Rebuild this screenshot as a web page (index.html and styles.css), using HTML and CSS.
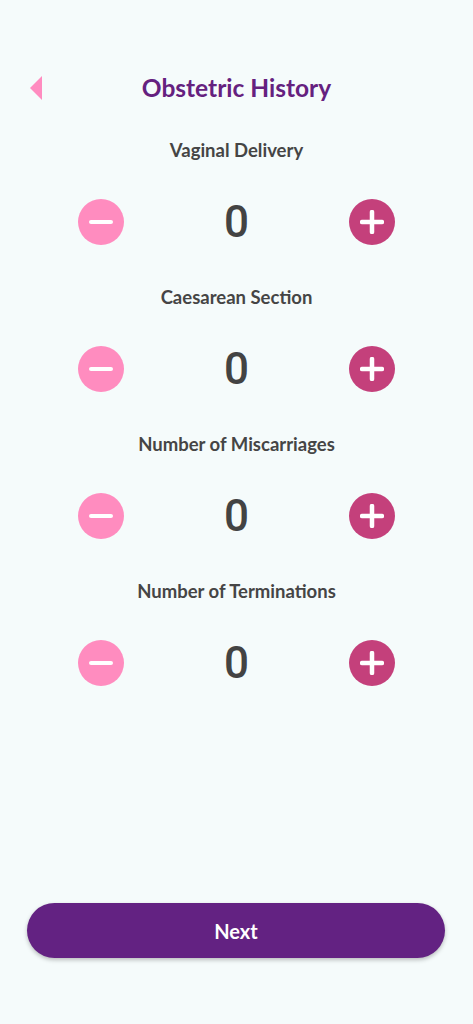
FILE: index.html
```html
<!DOCTYPE html>
<html lang="en">
<head>
<meta charset="utf-8">
<title>Obstetric History</title>
<link rel="stylesheet" href="styles.css">
</head>
<body>
<div class="screen">
  <header class="header">
    <button class="back" aria-label="Back">
      <svg width="12" height="24" viewBox="0 0 12 24"><path d="M12 0 L0 12 L12 24 Z" fill="#ff8cc0"/></svg>
    </button>
    <h1 class="title">Obstetric History</h1>
    <span></span>
  </header>

  <main class="groups">
    <section class="group">
      <div class="label">Vaginal Delivery</div>
      <div class="stepper">
        <button class="btn minus" aria-label="Decrease"><svg width="24" height="24" viewBox="0 0 24 24"><line x1="2" y1="12" x2="22" y2="12" stroke="#fff" stroke-width="4" stroke-linecap="round"/></svg></button>
        <span class="value">0</span>
        <button class="btn plus" aria-label="Increase"><svg width="24" height="24" viewBox="0 0 24 24"><line x1="2" y1="12" x2="22" y2="12" stroke="#fff" stroke-width="4.5" stroke-linecap="round"/><line x1="12" y1="2" x2="12" y2="22" stroke="#fff" stroke-width="4.5" stroke-linecap="round"/></svg></button>
      </div>
    </section>
    <section class="group">
      <div class="label">Caesarean Section</div>
      <div class="stepper">
        <button class="btn minus" aria-label="Decrease"><svg width="24" height="24" viewBox="0 0 24 24"><line x1="2" y1="12" x2="22" y2="12" stroke="#fff" stroke-width="4" stroke-linecap="round"/></svg></button>
        <span class="value">0</span>
        <button class="btn plus" aria-label="Increase"><svg width="24" height="24" viewBox="0 0 24 24"><line x1="2" y1="12" x2="22" y2="12" stroke="#fff" stroke-width="4.5" stroke-linecap="round"/><line x1="12" y1="2" x2="12" y2="22" stroke="#fff" stroke-width="4.5" stroke-linecap="round"/></svg></button>
      </div>
    </section>
    <section class="group">
      <div class="label">Number of Miscarriages</div>
      <div class="stepper">
        <button class="btn minus" aria-label="Decrease"><svg width="24" height="24" viewBox="0 0 24 24"><line x1="2" y1="12" x2="22" y2="12" stroke="#fff" stroke-width="4" stroke-linecap="round"/></svg></button>
        <span class="value">0</span>
        <button class="btn plus" aria-label="Increase"><svg width="24" height="24" viewBox="0 0 24 24"><line x1="2" y1="12" x2="22" y2="12" stroke="#fff" stroke-width="4.5" stroke-linecap="round"/><line x1="12" y1="2" x2="12" y2="22" stroke="#fff" stroke-width="4.5" stroke-linecap="round"/></svg></button>
      </div>
    </section>
    <section class="group">
      <div class="label">Number of Terminations</div>
      <div class="stepper">
        <button class="btn minus" aria-label="Decrease"><svg width="24" height="24" viewBox="0 0 24 24"><line x1="2" y1="12" x2="22" y2="12" stroke="#fff" stroke-width="4" stroke-linecap="round"/></svg></button>
        <span class="value">0</span>
        <button class="btn plus" aria-label="Increase"><svg width="24" height="24" viewBox="0 0 24 24"><line x1="2" y1="12" x2="22" y2="12" stroke="#fff" stroke-width="4.5" stroke-linecap="round"/><line x1="12" y1="2" x2="12" y2="22" stroke="#fff" stroke-width="4.5" stroke-linecap="round"/></svg></button>
      </div>
    </section>
  </main>

  <footer class="footer">
    <button class="next">Next</button>
  </footer>
</div>
</body>
</html>
```

FILE: styles.css
```css
* { box-sizing: border-box; }
html, body { margin: 0; padding: 0; }
body {
  background: #f5fbfb;
  font-family: Lato, "Noto Sans", sans-serif;
}
.screen {
  min-height: 1024px;
  display: flex;
  flex-direction: column;
}
.header {
  display: grid;
  grid-template-columns: 1fr auto 1fr;
  align-items: center;
  padding: 73px 30px 0 30px;
  height: 103px;
}
.back {
  justify-self: start;
  background: none;
  border: 0;
  padding: 0;
  width: 12px;
  height: 24px;
  display: flex;
}
.title {
  margin: 0;
  font-size: 24.5px;
  line-height: 30px;
  font-weight: 700;
  color: #65217f;
  text-align: center;
}
.groups {
  display: flex;
  flex-direction: column;
  gap: 42px;
  padding-top: 37px;
}
.group {
  display: flex;
  flex-direction: column;
  gap: 39px;
}
.label {
  text-align: center;
  font-size: 18.5px;
  line-height: 20px;
  font-weight: 700;
  color: #454545;
}
.stepper {
  display: flex;
  align-items: center;
  justify-content: space-between;
  padding: 0 78px;
  height: 46px;
}
.btn {
  width: 46px;
  height: 46px;
  border-radius: 50%;
  border: 0;
  padding: 0;
  display: flex;
  align-items: center;
  justify-content: center;
}
.minus { background: #ff8cbf; }
.plus { background: #c4407b; }
.value {
  font-family: Roboto, "Noto Sans", sans-serif;
  font-weight: 500;
  font-size: 44px;
  line-height: 46px;
  color: #434343;
}
.footer {
  margin-top: auto;
  padding: 0 28px 66px 27px;
}
.next {
  width: 100%;
  height: 55px;
  border: 0;
  border-radius: 28px;
  background: #632282;
  color: #fff;
  font-family: Lato, "Noto Sans", sans-serif;
  font-weight: 700;
  font-size: 20px;
  box-shadow: 0 2px 4px rgba(0,0,0,0.25);
}
```
